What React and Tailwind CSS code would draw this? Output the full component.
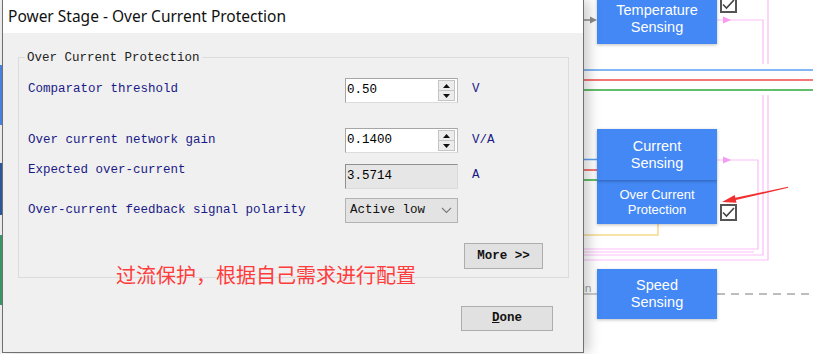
import React from 'react';

const mono = "font-['Liberation_Mono',monospace] text-[12.5px]";

const SpinField = ({ value }) => (
  <div className="flex h-[25px] w-[113px] border border-[#a6a6a6] border-b-[#dcdcdc] border-r-[#bdbdbd] bg-white">
    <span className={`flex-1 pl-[1px] leading-[23px] text-black ${mono}`}>{value}</span>
    <div className="my-[1px] mr-[2px] flex w-[17px] flex-col border border-[#c4c4c4] bg-[#ececec]">
      <div className="flex flex-1 items-center justify-center border-b border-[#c4c4c4]">
        <svg width="7" height="4" viewBox="0 0 7 4">
          <polygon points="0,4 3.5,0 7,4" fill="#111" />
        </svg>
      </div>
      <div className="flex flex-1 items-center justify-center">
        <svg width="7" height="4" viewBox="0 0 7 4">
          <polygon points="0,0 3.5,4 7,0" fill="#111" />
        </svg>
      </div>
    </div>
  </div>
);

const CheckBox = ({ className }) => (
  <div className={`absolute flex h-[17px] w-[17px] items-center justify-center border-2 border-[#555] bg-white ${className}`}>
    <svg width="13" height="11" viewBox="0 0 13 11">
      <path d="M1 5.5 L4.5 9 L12 1" fill="none" stroke="#444" strokeWidth="1.6" />
    </svg>
  </div>
);

const nodeText = "font-['Liberation_Sans',sans-serif] text-white text-center";

const Dialog = () => (
  <div className="relative z-10 flex h-[353px] w-[582px] shrink-0 flex-col border-x border-b border-[#707070] bg-[#f0f0f0] shadow-[5px_0_12px_rgba(0,0,0,0.2)]">
    {/* Title bar */}
    <div className="flex h-[33px] items-center bg-white pl-[5px] font-['Noto_Sans',sans-serif] text-[15.5px] text-[#111]">
      Power Stage - Over Current Protection
    </div>

    {/* Group box */}
    <div className={`relative ml-[15px] mr-[14px] mt-[24px] h-[221px] border border-[#dcdcdc] ${mono}`}>
      <span className="absolute -top-[8px] left-[6px] bg-[#f0f0f0] px-[2px] leading-[16px] text-[#222]">
        Over Current Protection
      </span>

      <div className="mt-[20px] flex h-[25px] pl-[9px]">
        <div className="w-[317px] pt-[3px] leading-[16px] text-[#1a1a86]">Comparator threshold</div>
        <SpinField value="0.50" />
        <div className="ml-[14px] pt-[3px] leading-[16px] text-[#1a1a86]">V</div>
      </div>

      <div className="mt-[25px] flex h-[25px] pl-[9px]">
        <div className="w-[317px] pt-[4px] leading-[16px] text-[#1a1a86]">Over current network gain</div>
        <SpinField value="0.1400" />
        <div className="ml-[14px] pt-[4px] leading-[16px] text-[#1a1a86]">V/A</div>
      </div>

      <div className="mt-[11px] flex h-[25px] pl-[9px]">
        <div className="-mt-[2px] w-[317px] leading-[16px] text-[#1a1a86]">Expected over-current</div>
        <div className="h-[25px] w-[113px] border border-[#8f8f8f] border-b-[#dadada] border-r-[#dadada] bg-[#e6e6e6] pl-[1px] leading-[23px] text-black">
          3.5714
        </div>
        <div className="ml-[14px] pt-[3px] leading-[16px] text-[#1a1a86]">A</div>
      </div>

      <div className="mt-[9px] flex h-[25px] pl-[9px]">
        <div className="w-[317px] pt-[4px] leading-[16px] text-[#1a1a86]">Over-current feedback signal polarity</div>
        <div className="flex h-[25px] w-[113px] items-center border border-[#b3b3b3] bg-[#e3e3e3] pl-[4px] text-[#111]">
          <span>Active low</span>
          <svg className="ml-auto mr-[5px]" width="11" height="7" viewBox="0 0 11 7">
            <path d="M1 1 L5.5 5.5 L10 1" fill="none" stroke="#7a7a7a" strokeWidth="1.1" />
          </svg>
        </div>
      </div>

      <div className="mt-[20px] flex justify-end pr-[25px]">
        <button className="h-[26px] w-[79px] border border-[#adadad] bg-[#e1e1e1] font-bold text-[#111]">
          More &gt;&gt;
        </button>
      </div>
    </div>

    <div className={`mt-[28px] flex justify-end pr-[30px] ${mono}`}>
      <button className="h-[25px] w-[92px] border border-[#adadad] bg-[#e1e1e1] font-bold text-[#111]">
        <span className="underline">D</span>one
      </button>
    </div>

    {/* annotation */}
    <div className="absolute left-[113px] top-[263px] font-['Noto_Sans_CJK_SC',sans-serif] text-[20px] leading-[24px] text-[#ff3c3c]">
      过流保护，根据自己需求进行配置
    </div>
  </div>
);

const Canvas = () => (
  <div className="relative flex-1 bg-white">
    <svg className="absolute inset-0" width="229" height="354">
      {/* feed into temperature block */}
      <line x1="0" y1="20" x2="8" y2="20" stroke="#8c8c8c" strokeWidth="1.5" />
      <polygon points="6,16.5 13,20 6,23.5" fill="#8c8c8c" />

      {/* signal bus */}
      <line x1="0" y1="70" x2="229" y2="70" stroke="#5b9ef0" strokeWidth="1.5" />
      <line x1="0" y1="80" x2="229" y2="80" stroke="#f04848" strokeWidth="1.5" />
      <line x1="0" y1="90" x2="229" y2="90" stroke="#2ea83a" strokeWidth="1.5" />
      <line x1="0" y1="159.5" x2="13" y2="159.5" stroke="#5b9ef0" strokeWidth="1.5" />
      <line x1="0" y1="170" x2="13" y2="170" stroke="#f04848" strokeWidth="1.5" />
      <line x1="0" y1="180" x2="13" y2="180" stroke="#2ea83a" strokeWidth="1.5" />

      {/* pink wiring */}
      <g fill="none" stroke="#fbbdf7" strokeWidth="1.2">
        <polyline points="133,20 179,20 179,64" />
        <line x1="184" y1="0" x2="184" y2="64" />
        <polyline points="133,160 174,160 174,249 0,249" />
        <polyline points="179,95 179,255 0,255" />
        <polyline points="184,95 184,260 0,260" />
        <line x1="0" y1="252" x2="170" y2="252" />
      </g>
      <polygon points="139,16.5 147,20 139,23.5" fill="#f79af2" />
      <polygon points="139,156.5 147,160 139,163.5" fill="#f79af2" />

      {/* yellow */}
      <polyline points="74,224 74,235 0,235" fill="none" stroke="#f5d98b" strokeWidth="1.5" />

      {/* speed link */}
      <line x1="0" y1="294" x2="13" y2="294" stroke="#a8a8a8" strokeWidth="1.2" />
      <line x1="133" y1="294" x2="229" y2="294" stroke="#a8a8a8" strokeWidth="1.5" strokeDasharray="8 6" />

      {/* red pointer */}
      <polygon
        points="204,186.8 151.3,197.7 150.7,195 138,202 152.5,202.8 151.9,200.1 204.2,187.8"
        fill="#f03030"
      />
    </svg>

    <span className="absolute -left-[2px] top-[282px] font-['Noto_Sans',sans-serif] text-[11px] leading-[12px] text-[#a0a0a0]">in</span>

    <div className={`absolute left-[13px] top-[-6px] flex h-[50px] w-[120px] flex-col justify-center bg-[#4388f5] text-[14.5px] leading-[17px] shadow-[0_1px_3px_rgba(0,0,0,0.25)] ${nodeText}`}>
      <span>Temperature</span>
      <span>Sensing</span>
    </div>
    <CheckBox className="left-[136px] top-[-4px]" />

    <div className={`absolute left-[13px] top-[180px] flex h-[44px] w-[120px] flex-col justify-center bg-[#4388f5] text-[13px] leading-[15px] shadow-[0_1px_3px_rgba(0,0,0,0.25)] ${nodeText}`}>
      <span>Over Current</span>
      <span>Protection</span>
    </div>
    <div className={`absolute left-[13px] top-[129px] flex h-[51px] w-[120px] flex-col justify-center bg-[#4388f5] text-[14.5px] leading-[17px] shadow-[0_1px_3px_rgba(0,0,0,0.3)] ${nodeText}`}>
      <span>Current</span>
      <span>Sensing</span>
    </div>
    <CheckBox className="left-[136px] top-[204px]" />

    <div className={`absolute left-[13px] top-[269px] flex h-[50px] w-[120px] flex-col justify-center bg-[#4388f5] text-[14.5px] leading-[17px] shadow-[0_1px_3px_rgba(0,0,0,0.25)] ${nodeText}`}>
      <span>Speed</span>
      <span>Sensing</span>
    </div>
  </div>
);

export default function App() {
  return (
    <div className="flex h-[354px] w-[813px] overflow-hidden bg-white">
      {/* sliver of the diagram left of the dialog */}
      <div className="flex w-[2px] shrink-0 flex-col bg-[#f2f2f2]">
        <div className="h-[65px]" />
        <div className="h-[60px] bg-[#4a86e8]" />
        <div className="h-[38px]" />
        <div className="h-[52px] bg-[#2f5aa0]" />
        <div className="h-[20px]" />
        <div className="h-[70px] bg-[#3c9a6a]" />
      </div>
      <Dialog />
      <Canvas />
    </div>
  );
}
